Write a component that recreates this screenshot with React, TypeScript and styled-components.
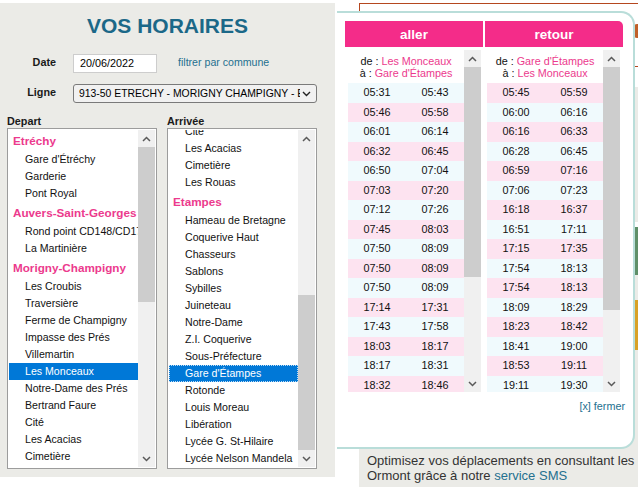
import React from 'react';
import styled, { createGlobalStyle } from 'styled-components';

const GlobalStyle = createGlobalStyle`
  html, body { margin: 0; padding: 0; background: #ffffff; }
  body {
    font-family: "Liberation Sans", Arial, sans-serif;
    width: 638px;
    height: 487px;
    overflow: hidden;
    color: #111;
  }
  * { box-sizing: border-box; }
`;

const PINK = '#ec3a8d';
const LINK = '#24708f';

const Page = styled.div`
  position: relative;
  display: flex;
  width: 638px;
  height: 487px;
  overflow: hidden;
`;

/* ---------- left panel ---------- */
const LeftPanel = styled.div`
  flex: 0 0 335px;
  height: 474px;
  margin-top: 3px;
  background: #ebebe7;
  padding-top: 11px;
  display: flex;
  flex-direction: column;
`;

const Title = styled.h1`
  margin: 0;
  font-size: 21px;
  line-height: 24px;
  font-weight: bold;
  color: #1b6888;
  text-align: center;
`;

const FormGrid = styled.div`
  margin-top: 16px;
  display: grid;
  grid-template-columns: 56px auto;
  column-gap: 17px;
  row-gap: 11px;
  align-items: center;
`;

const FieldLabel = styled.label`
  font-size: 10.8px;
  font-weight: bold;
  text-align: right;
  padding-bottom: 3px;
  color: #1a1a1a;
`;

const FieldRow = styled.div`
  display: flex;
  align-items: center;
  gap: 21px;
`;

const DateInput = styled.div`
  width: 84px;
  height: 19px;
  border: 1px solid #cdcdcd;
  background: #fff;
  padding-left: 6px;
  font-size: 10.8px;
  line-height: 17px;
  color: #000;
`;

const FilterLink = styled.span`
  font-size: 10.6px;
  color: ${LINK};
  padding-bottom: 3px;
`;

const SelectBox = styled.div`
  width: 244px;
  height: 19px;
  border: 1px solid #7a7a7a;
  border-radius: 3px;
  background: #f1f1f1;
  padding-left: 5px;
  display: flex;
  align-items: center;
  font-size: 10.4px;
  color: #000;
`;

const SelectText = styled.span`
  flex: 1;
  overflow: hidden;
  white-space: nowrap;
`;

const SelectArrow = styled.span`
  flex: 0 0 auto;
  display: flex;
  margin: 0 5px 0 2px;
`;

const ListsRow = styled.div`
  margin-top: 12px;
  padding-left: 7px;
  display: flex;
  gap: 10px;
`;

const ListColumn = styled.div`
  display: flex;
  flex-direction: column;
`;

const ListLabel = styled.div`
  font-size: 10.8px;
  line-height: 13px;
  font-weight: bold;
  color: #1a1a1a;
`;

const ListBox = styled.div`
  width: 150px;
  height: 341px;
  border: 1px solid #9c9c9c;
  background: #fff;
  padding: 1px;
  display: flex;
`;

const ListView = styled.div<{ $end?: boolean }>`
  flex: 1;
  min-width: 0;
  overflow: hidden;
  display: flex;
  flex-direction: column;
  justify-content: ${(p) => (p.$end ? 'flex-end' : 'flex-start')};
`;

const GroupLabel = styled.div`
  flex: 0 0 21px;
  padding: 1px 0 0 4px;
  line-height: 20px;
  font-size: 11.7px;
  font-weight: bold;
  color: ${PINK};
  white-space: nowrap;
  overflow: hidden;
`;

const ListItem = styled.div<{ $selected?: boolean; $focus?: boolean }>`
  flex: 0 0 17px;
  padding-left: 16px;
  line-height: 17px;
  font-size: 10.6px;
  white-space: nowrap;
  overflow: hidden;
  color: ${(p) => (p.$selected ? '#fff' : '#111')};
  background: ${(p) => (p.$selected ? '#0078d7' : 'transparent')};
  outline: ${(p) => (p.$focus ? '1px dotted rgba(255,255,255,0.75)' : 'none')};
  outline-offset: -1px;
`;

/* ---------- scrollbar ---------- */
const ScrollTrack = styled.div`
  flex: 0 0 17px;
  background: #f0f0f0;
  display: flex;
  flex-direction: column;
`;

const ArrowBtn = styled.div`
  flex: 0 0 17px;
  display: flex;
  align-items: center;
  justify-content: center;
`;

const Rail = styled.div<{ $end?: boolean }>`
  flex: 1;
  display: flex;
  flex-direction: column;
  justify-content: ${(p) => (p.$end ? 'flex-end' : 'flex-start')};
`;

const Thumb = styled.div<{ $size: number }>`
  flex: 0 0 ${(p) => p.$size}px;
  background: #cdcdcd;
`;

const Chevron = ({ dir }: { dir: 'up' | 'down' }) => (
  <svg width="9" height="6" viewBox="0 0 9 6">
    <path
      d={dir === 'up' ? 'M1 5L4.5 1.5L8 5' : 'M1 1L4.5 4.5L8 1'}
      fill="none"
      stroke="#5a5a5a"
      strokeWidth="1.5"
    />
  </svg>
);

const Scrollbar = ({ size, end }: { size: number; end?: boolean }) => (
  <ScrollTrack>
    <ArrowBtn>
      <Chevron dir="up" />
    </ArrowBtn>
    <Rail $end={end}>
      <Thumb $size={size} />
    </Rail>
    <ArrowBtn>
      <Chevron dir="down" />
    </ArrowBtn>
  </ScrollTrack>
);

/* ---------- background page (right) ---------- */
const BgArea = styled.div`
  flex: 0 0 320px;
  padding: 3px 0 0 24px;
  display: flex;
  flex-direction: column;
`;

const TopBox = styled.div`
  flex: 0 0 64px;
  border: 1px solid #b5471f;
  border-right: none;
  display: flex;
  align-items: center;
  padding: 0 0 8px 274px;
`;

const TopIcon = styled.div`
  width: 14px;
  height: 14px;
  border-radius: 3px;
  background: #c0602a;
`;

const GreyPanel = styled.div`
  margin-top: 20px;
  flex: 1;
  background: #ebebe7;
  display: flex;
  flex-direction: column;
  padding: 0 0 4px 8px;
`;

const SideBlock = styled.div<{ $h: number; $top: number; $c: string }>`
  margin: ${(p) => p.$top}px 0 0 266px;
  width: 20px;
  height: ${(p) => p.$h}px;
  background: ${(p) => p.$c};
`;

const InfoText = styled.div`
  margin-top: auto;
  font-size: 13px;
  line-height: 15px;
  color: #333;
  white-space: nowrap;
`;

const InfoLink = styled.span`
  color: ${LINK};
`;

/* ---------- popup ---------- */
const Popup = styled.div`
  position: absolute;
  left: 337px;
  top: 11px;
  width: 298px;
  height: 438px;
  background: #fff;
  border: 2px solid #b9ddd9;
  border-left: none;
  border-radius: 0 14px 14px 0;
  padding: 8px 10px 0 8px;
  display: flex;
  flex-direction: column;
`;

const Columns = styled.div`
  display: flex;
  gap: 2px;
`;

const Column = styled.div`
  flex: 0 0 138px;
  display: flex;
  flex-direction: column;
`;

const ColHeader = styled.div<{ $round?: boolean }>`
  height: 26px;
  background: #f42c89;
  color: #fff;
  font-size: 13.5px;
  font-weight: bold;
  display: flex;
  align-items: center;
  justify-content: center;
  border-top-right-radius: ${(p) => (p.$round ? '5px' : '0')};
`;

const ColBody = styled.div<{ $first?: boolean }>`
  height: 342px;
  margin: ${(p) => (p.$first ? '3px 2px 0 3px' : '3px 3px 0 2px')};
  display: flex;
`;

const TimesView = styled.div`
  flex: 1;
  min-width: 0;
  overflow: hidden;
  display: flex;
  flex-direction: column;
`;

const FromTo = styled.div`
  flex: 0 0 33px;
  padding-top: 5px;
  text-align: center;
  font-size: 10.8px;
  line-height: 12px;
  color: #111;
  white-space: nowrap;
`;

const Stop = styled.span`
  color: ${PINK};
`;

const TimeRow = styled.div<{ $pink: boolean }>`
  flex: 0 0 19.5px;
  display: flex;
  background: ${(p) => (p.$pink ? '#fde3f0' : '#f0fafd')};
`;

const TimeCell = styled.div`
  flex: 1;
  text-align: center;
  font-size: 10.8px;
  line-height: 19.5px;
  color: #111;
`;

const CloseRow = styled.div`
  margin: 8px -2px 0 0;
  text-align: right;
  font-size: 10.8px;
  line-height: 12px;
  color: ${LINK};
`;

/* ---------- data ---------- */
const groups = [
  { name: 'Etréchy', items: ["Gare d'Étréchy", 'Garderie', 'Pont Royal'] },
  { name: 'Auvers-Saint-Georges', items: ['Rond point CD148/CD17', 'La Martinière'] },
  {
    name: 'Morigny-Champigny',
    items: [
      'Les Croubis', 'Traversière', 'Ferme de Champigny', 'Impasse des Prés', 'Villemartin',
      'Les Monceaux', 'Notre-Dame des Prés', 'Bertrand Faure', 'Cité', 'Les Acacias',
      'Cimetière', 'Les Rouas',
    ],
  },
  {
    name: 'Etampes',
    items: [
      'Hameau de Bretagne', 'Coquerive Haut', 'Chasseurs', 'Sablons', 'Sybilles', 'Juineteau',
      'Notre-Dame', 'Z.I. Coquerive', 'Sous-Préfecture', "Gare d'Étampes", 'Rotonde',
      'Louis Moreau', 'Libération', 'Lycée G. St-Hilaire', 'Lycée Nelson Mandela',
    ],
  },
];

const aller = [
  ['05:31', '05:43'], ['05:46', '05:58'], ['06:01', '06:14'], ['06:32', '06:45'],
  ['06:50', '07:04'], ['07:03', '07:20'], ['07:12', '07:26'], ['07:45', '08:03'],
  ['07:50', '08:09'], ['07:50', '08:09'], ['07:50', '08:09'], ['17:14', '17:31'],
  ['17:43', '17:58'], ['18:03', '18:17'], ['18:17', '18:31'], ['18:32', '18:46'],
];

const retour = [
  ['05:45', '05:59'], ['06:00', '06:16'], ['06:16', '06:33'], ['06:28', '06:45'],
  ['06:59', '07:16'], ['07:06', '07:23'], ['16:18', '16:37'], ['16:51', '17:11'],
  ['17:15', '17:35'], ['17:54', '18:13'], ['17:54', '18:13'], ['18:09', '18:29'],
  ['18:23', '18:42'], ['18:41', '19:00'], ['18:53', '19:11'], ['19:11', '19:30'],
];

const StopList = ({ selected, end, focus, thumb }: { selected: string; end?: boolean; focus?: boolean; thumb: number }) => (
  <ListBox>
    <ListView $end={end}>
      {groups.map((g) => (
        <React.Fragment key={g.name}>
          <GroupLabel>{g.name}</GroupLabel>
          {g.items.map((it) => (
            <ListItem key={it} $selected={it === selected} $focus={focus && it === selected}>
              {it}
            </ListItem>
          ))}
        </React.Fragment>
      ))}
    </ListView>
    <Scrollbar size={thumb} end={end} />
  </ListBox>
);

const TimesColumn = ({
  title, from, to, rows, pinkFirst, thumb, first, round,
}: {
  title: string; from: string; to: string; rows: string[][]; pinkFirst: boolean; thumb: number; first?: boolean; round?: boolean;
}) => (
  <Column>
    <ColHeader $round={round}>{title}</ColHeader>
    <ColBody $first={first}>
      <TimesView>
        <FromTo>
          de : <Stop>{from}</Stop>
          <br />
          à : <Stop>{to}</Stop>
        </FromTo>
        {rows.map((r, i) => (
          <TimeRow key={i} $pink={pinkFirst ? i % 2 === 0 : i % 2 === 1}>
            <TimeCell>{r[0]}</TimeCell>
            <TimeCell>{r[1]}</TimeCell>
          </TimeRow>
        ))}
      </TimesView>
      <Scrollbar size={thumb} />
    </ColBody>
  </Column>
);

export default function App() {
  return (
    <>
      <GlobalStyle />
      <Page>
        <LeftPanel>
          <Title>VOS HORAIRES</Title>
          <FormGrid>
            <FieldLabel>Date</FieldLabel>
            <FieldRow>
              <DateInput>20/06/2022</DateInput>
              <FilterLink>filtrer par commune</FilterLink>
            </FieldRow>
            <FieldLabel>Ligne</FieldLabel>
            <FieldRow>
              <SelectBox>
                <SelectText>913-50 ETRECHY - MORIGNY CHAMPIGNY - ETAMPES</SelectText>
                <SelectArrow>
                  <svg width="9" height="6" viewBox="0 0 9 6">
                    <path d="M1 1L4.5 4.5L8 1" fill="none" stroke="#222" strokeWidth="1.4" />
                  </svg>
                </SelectArrow>
              </SelectBox>
            </FieldRow>
          </FormGrid>
          <ListsRow>
            <ListColumn>
              <ListLabel>Depart</ListLabel>
              <StopList selected="Les Monceaux" thumb={155} />
            </ListColumn>
            <ListColumn>
              <ListLabel>Arrivée</ListLabel>
              <StopList selected="Gare d'Étampes" end focus thumb={155} />
            </ListColumn>
          </ListsRow>
        </LeftPanel>

        <BgArea>
          <TopBox>
            <TopIcon />
          </TopBox>
          <GreyPanel>
            <SideBlock $top={135} $h={5} $c="#ffffff" />
            <SideBlock $top={0} $h={48} $c="#5f8f68" />
            <SideBlock $top={25} $h={50} $c="#d9a126" />
            <InfoText>
              Optimisez vos déplacements en consultant les horaires
              <br />
              Ormont grâce à notre <InfoLink>service SMS</InfoLink>
            </InfoText>
          </GreyPanel>
        </BgArea>

        <Popup>
          <Columns>
            <TimesColumn
              title="aller"
              from="Les Monceaux"
              to="Gare d'Étampes"
              rows={aller}
              pinkFirst={false}
              thumb={210}
              first
            />
            <TimesColumn
              title="retour"
              from="Gare d'Étampes"
              to="Les Monceaux"
              rows={retour}
              pinkFirst
              thumb={243}
              round
            />
          </Columns>
          <CloseRow>[x] fermer</CloseRow>
        </Popup>
      </Page>
    </>
  );
}
